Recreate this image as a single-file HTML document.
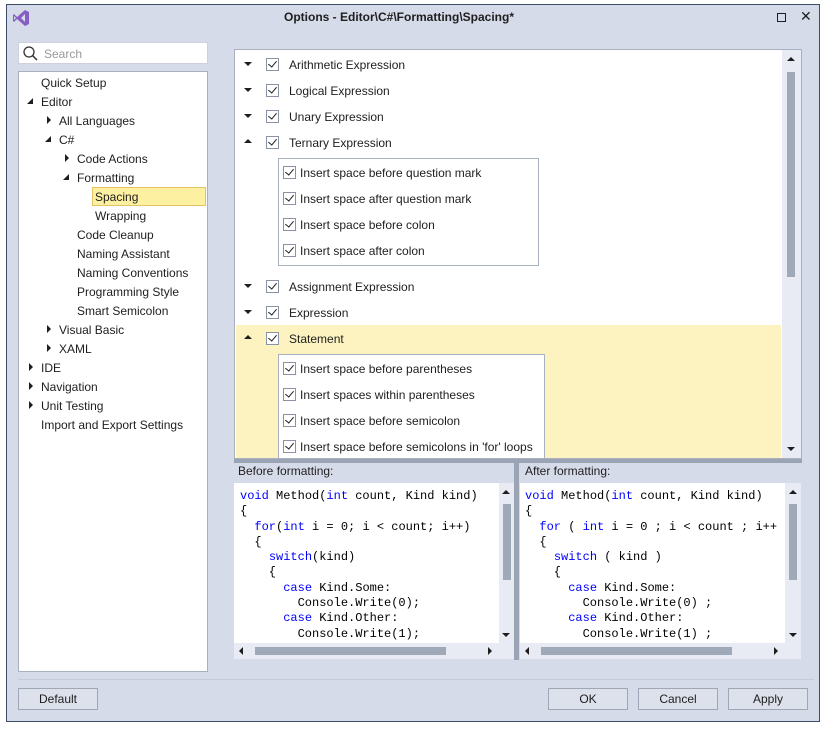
<!DOCTYPE html>
<html><head><meta charset="utf-8"><style>
*{margin:0;padding:0;box-sizing:border-box}
body{width:826px;height:729px;background:#fff;font-family:"Liberation Sans",sans-serif;font-size:12px;color:#1e1e1e;position:relative;overflow:hidden}
.a{position:absolute}
.win{left:6px;top:4px;width:814px;height:718px;background:#d6dbe9;border:1px solid #3e4e6a}
.t{position:absolute;white-space:nowrap}
.cb{position:absolute;width:13px;height:13px;border:1px solid #8a93a4;background:#fff}
.cb:after{content:"";position:absolute;left:3px;top:0px;width:4px;height:7px;border:solid #1e1e1e;border-width:0 1.5px 1.5px 0;transform:rotate(40deg)}
.dn{position:absolute;width:0;height:0;border-left:4px solid transparent;border-right:4px solid transparent;border-top:4px solid #1e1e1e}
.up{position:absolute;width:0;height:0;border-left:4px solid transparent;border-right:4px solid transparent;border-bottom:4px solid #1e1e1e}
.rt{position:absolute;width:0;height:0;border-top:4px solid transparent;border-bottom:4px solid transparent;border-left:4px solid #1e1e1e}
.dr{position:absolute;width:0;height:0;border-left:6px solid transparent;border-bottom:6px solid #1e1e1e}
.code{font-family:"Liberation Mono",monospace;font-size:12px;line-height:15.3px;white-space:pre;color:#000}
.k{color:#0000ff}
.btn{position:absolute;height:22px;border:1px solid #a0a7b4;background:#dde1ec;text-align:center;line-height:20px}
.sbv{position:absolute;background:#e8ebf3}
.th{position:absolute;background:#a0a9b8}
</style></head><body>
<div class="a win"></div>
<svg class="a" style="left:12px;top:9px" width="18" height="18" viewBox="0 0 18 18"><path d="M13 1 L17 3 V15 L13 17 L5 10 L2 13 L1 12 V6 L2 5 L5 8 Z M13 5 L9 9 L13 13 Z M2 7 V11 L4 9 Z" fill="#865fc5"/></svg>
<div class="t" style="left:284px;top:10px;font-weight:bold;font-size:12px">Options - Editor\C#\Formatting\Spacing*</div>
<div class="a" style="left:777px;top:13px;width:9px;height:9px;border:1px solid #1e1e1e"></div>
<div class="t" style="left:800px;top:8px;font-size:14px">✕</div>

<div class="a" style="left:18px;top:42px;width:190px;height:22px;background:#fff;border:1px solid #ccd1dc"></div>
<svg class="a" style="left:22px;top:45px" width="16" height="16"><circle cx="7" cy="7" r="5" fill="none" stroke="#333" stroke-width="1.3"/><line x1="10.5" y1="10.5" x2="15" y2="15" stroke="#333" stroke-width="1.5"/></svg>
<div class="t" style="left:44px;top:47px;color:#999">Search</div>

<div class="a" style="left:18px;top:71px;width:190px;height:601px;background:#fff;border:1px solid #a9b1c0"></div>
<div class="a" style="left:92px;top:187px;width:114px;height:19px;background:#fdf0a0;border:1px solid #e5c365"></div>
<div class="t" style="left:41px;top:76px">Quick Setup</div>
<div class="dr" style="left:27px;top:98px"></div><div class="t" style="left:41px;top:95px">Editor</div>
<div class="rt" style="left:47px;top:116px"></div><div class="t" style="left:59px;top:114px">All Languages</div>
<div class="dr" style="left:45px;top:136px"></div><div class="t" style="left:59px;top:133px">C#</div>
<div class="rt" style="left:65px;top:154px"></div><div class="t" style="left:77px;top:152px">Code Actions</div>
<div class="dr" style="left:63px;top:174px"></div><div class="t" style="left:77px;top:171px">Formatting</div>
<div class="t" style="left:95px;top:190px">Spacing</div>
<div class="t" style="left:95px;top:209px">Wrapping</div>
<div class="t" style="left:77px;top:228px">Code Cleanup</div>
<div class="t" style="left:77px;top:247px">Naming Assistant</div>
<div class="t" style="left:77px;top:266px">Naming Conventions</div>
<div class="t" style="left:77px;top:285px">Programming Style</div>
<div class="t" style="left:77px;top:304px">Smart Semicolon</div>
<div class="rt" style="left:47px;top:325px"></div><div class="t" style="left:59px;top:323px">Visual Basic</div>
<div class="rt" style="left:47px;top:344px"></div><div class="t" style="left:59px;top:342px">XAML</div>
<div class="rt" style="left:29px;top:363px"></div><div class="t" style="left:41px;top:361px">IDE</div>
<div class="rt" style="left:29px;top:382px"></div><div class="t" style="left:41px;top:380px">Navigation</div>
<div class="rt" style="left:29px;top:401px"></div><div class="t" style="left:41px;top:399px">Unit Testing</div>
<div class="t" style="left:41px;top:418px">Import and Export Settings</div>

<div class="a" style="left:234px;top:49px;width:568px;height:410px;background:#fff;border:1px solid #a9b1c0"></div>
<div class="a" style="left:236px;top:325px;width:545px;height:133px;background:#fcf3c0"></div>
<div class="sbv" style="left:782px;top:50px;width:19px;height:408px"></div>
<div class="up" style="left:787px;top:57px"></div>
<div class="th" style="left:787px;top:72px;width:8px;height:205px"></div>
<div class="dn" style="left:787px;top:447px"></div>

<div class="dn" style="left:244px;top:62px"></div><div class="cb" style="left:266px;top:58px"></div><div class="t" style="left:289px;top:58px">Arithmetic Expression</div>
<div class="dn" style="left:244px;top:88px"></div><div class="cb" style="left:266px;top:84px"></div><div class="t" style="left:289px;top:84px">Logical Expression</div>
<div class="dn" style="left:244px;top:114px"></div><div class="cb" style="left:266px;top:110px"></div><div class="t" style="left:289px;top:110px">Unary Expression</div>
<div class="up" style="left:244px;top:139px"></div><div class="cb" style="left:266px;top:136px"></div><div class="t" style="left:289px;top:136px">Ternary Expression</div>
<div class="a" style="left:278px;top:158px;width:261px;height:108px;border:1px solid #a9b1c0;background:#fff"></div>
<div class="cb" style="left:283px;top:166px"></div><div class="t" style="left:300px;top:166px">Insert space before question mark</div>
<div class="cb" style="left:283px;top:192px"></div><div class="t" style="left:300px;top:192px">Insert space after question mark</div>
<div class="cb" style="left:283px;top:218px"></div><div class="t" style="left:300px;top:218px">Insert space before colon</div>
<div class="cb" style="left:283px;top:244px"></div><div class="t" style="left:300px;top:244px">Insert space after colon</div>
<div class="dn" style="left:244px;top:284px"></div><div class="cb" style="left:266px;top:280px"></div><div class="t" style="left:289px;top:280px">Assignment Expression</div>
<div class="dn" style="left:244px;top:310px"></div><div class="cb" style="left:266px;top:306px"></div><div class="t" style="left:289px;top:306px">Expression</div>
<div class="up" style="left:244px;top:335px"></div><div class="cb" style="left:266px;top:332px"></div><div class="t" style="left:289px;top:332px">Statement</div>
<div class="a" style="left:278px;top:354px;width:267px;height:104px;border:1px solid #a9b1c0;border-bottom:none;background:#fff"></div>
<div class="cb" style="left:283px;top:362px"></div><div class="t" style="left:300px;top:362px">Insert space before parentheses</div>
<div class="cb" style="left:283px;top:388px"></div><div class="t" style="left:300px;top:388px">Insert spaces within parentheses</div>
<div class="cb" style="left:283px;top:414px"></div><div class="t" style="left:300px;top:414px">Insert space before semicolon</div>
<div class="cb" style="left:283px;top:440px"></div><div class="t" style="left:300px;top:440px">Insert space before semicolons in 'for' loops</div>

<div class="a" style="left:234px;top:459px;width:568px;height:4px;background:#9aa4b4"></div>
<div class="a" style="left:514px;top:459px;width:5px;height:201px;background:#9aa4b4"></div>

<div class="t" style="left:238px;top:464px">Before formatting:</div>
<div class="a" style="left:234px;top:483px;width:265px;height:160px;background:#fff"></div>
<div class="sbv" style="left:499px;top:483px;width:15px;height:160px"></div>
<div class="up" style="left:502px;top:490px"></div><div class="th" style="left:503px;top:504px;width:8px;height:76px"></div><div class="dn" style="left:502px;top:633px"></div>
<div class="sbv" style="left:234px;top:643px;width:280px;height:16px"></div>
<div class="a" style="left:239px;top:647px;width:0;height:0;border-top:4px solid transparent;border-bottom:4px solid transparent;border-right:4px solid #1e1e1e"></div>
<div class="th" style="left:255px;top:647px;width:191px;height:8px"></div>
<div class="rt" style="left:488px;top:647px"></div>
<div class="a code" style="left:240px;top:489px;width:258px;height:153px;overflow:hidden"><span class="k">void</span> Method(<span class="k">int</span> count, Kind kind)
{
  <span class="k">for</span>(<span class="k">int</span> i = 0; i &lt; count; i++)
  {
    <span class="k">switch</span>(kind)
    {
      <span class="k">case</span> Kind.Some:
        Console.Write(0);
      <span class="k">case</span> Kind.Other:
        Console.Write(1);</div>

<div class="t" style="left:525px;top:464px">After formatting:</div>
<div class="a" style="left:520px;top:483px;width:265px;height:160px;background:#fff"></div>
<div class="sbv" style="left:785px;top:483px;width:16px;height:160px"></div>
<div class="up" style="left:789px;top:490px"></div><div class="th" style="left:789px;top:504px;width:8px;height:76px"></div><div class="dn" style="left:789px;top:633px"></div>
<div class="sbv" style="left:520px;top:643px;width:281px;height:16px"></div>
<div class="a" style="left:525px;top:647px;width:0;height:0;border-top:4px solid transparent;border-bottom:4px solid transparent;border-right:4px solid #1e1e1e"></div>
<div class="th" style="left:541px;top:647px;width:191px;height:8px"></div>
<div class="rt" style="left:774px;top:647px"></div>
<div class="a code" style="left:525px;top:489px;width:259px;height:153px;overflow:hidden"><span class="k">void</span> Method(<span class="k">int</span> count, Kind kind)
{
  <span class="k">for</span> ( <span class="k">int</span> i = 0 ; i &lt; count ; i++ )
  {
    <span class="k">switch</span> ( kind )
    {
      <span class="k">case</span> Kind.Some:
        Console.Write(0) ;
      <span class="k">case</span> Kind.Other:
        Console.Write(1) ;</div>

<div class="a" style="left:18px;top:679px;width:796px;height:1px;background:#c5cad6"></div>
<div class="btn" style="left:18px;top:688px;width:80px">Default</div>
<div class="btn" style="left:548px;top:688px;width:80px">OK</div>
<div class="btn" style="left:638px;top:688px;width:80px">Cancel</div>
<div class="btn" style="left:728px;top:688px;width:80px">Apply</div>
</body></html>
